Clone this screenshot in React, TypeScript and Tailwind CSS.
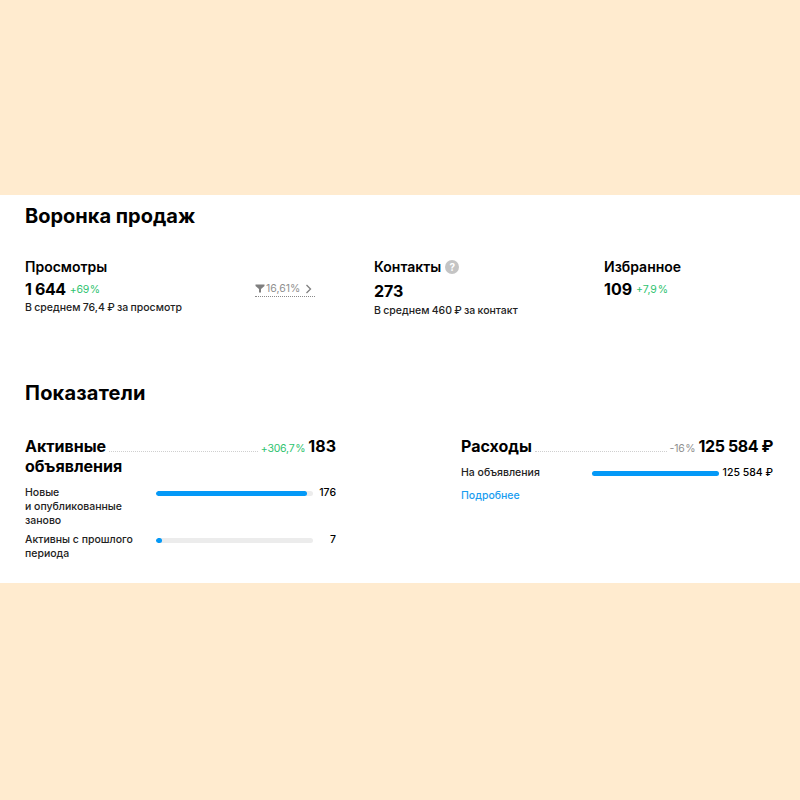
import React from "react";

const font = { fontFamily: "Inter, 'Noto Sans', sans-serif" };

function Bar({ pct }: { pct: number }) {
  return (
    <div className="h-[5px] w-[157px] shrink-0 overflow-hidden rounded-full bg-[#ececec]">
      <div className="h-full rounded-full bg-[#0499f7]" style={{ width: `${pct}%` }} />
    </div>
  );
}

export default function App() {
  return (
    <div className="flex h-[800px] w-[800px] flex-col bg-[#ffebcf] text-black" style={font}>
      <div className="mt-[195px] flex h-[388px] w-full flex-col bg-white px-[25px]">
        <h2 className="mt-[7px] text-[20px] leading-[28px] font-bold">Воронка продаж</h2>

        <div className="mt-[27px] flex">
          <div className="w-[290px]">
            <div className="text-[14px] leading-[20px] font-semibold">Просмотры</div>
            <div className="mt-[1px] flex h-[22px] items-center">
              <span className="text-[16px] leading-[22px] font-bold tracking-[-0.4px]">1 644</span>
              <span className="ml-[4px] mt-[2px] text-[10.5px] leading-[14px] text-[#2fc36f] tracking-[-0.2px] [word-spacing:-2px]">+69 %</span>
              <span className="ml-auto flex h-[16px] w-[60px] items-center border-b border-dotted border-[#8a8a8a] text-[10.5px] leading-[14px] text-[#8f8f8f]">
                <svg width="10" height="9" viewBox="0 0 10 9" className="mr-[1px]">
                  <path d="M0.5 0.5h9v1.5L6 5v3.5H4V5L0.5 2z" fill="#7f7f7f" />
                </svg>
                16,61%
                <svg width="7" height="10" viewBox="0 0 7 10" className="ml-auto mr-[3px]">
                  <path d="M1.5 1l4 4-4 4" fill="none" stroke="#7f7f7f" strokeWidth="1.3" />
                </svg>
              </span>
            </div>
            <div className="mt-[1px] text-[10.5px] leading-[14px] font-medium text-[#222] [word-spacing:-0.5px]">В среднем 76,4 ₽ за просмотр</div>
          </div>

          <div className="ml-[59px] w-[230px]">
            <div className="flex items-center text-[14px] leading-[20px] font-semibold">
              Контакты
              <span className="ml-[4px] flex h-[14px] w-[14px] items-center justify-center rounded-full bg-[#c4c4c4] text-[10px] leading-none font-bold text-white">?</span>
            </div>
            <div className="mt-[3px] text-[16px] leading-[22px] font-bold">273</div>
            <div className="mt-[2px] text-[10.5px] leading-[14px] font-medium text-[#222] [word-spacing:-0.5px]">В среднем 460 ₽ за контакт</div>
          </div>

          <div>
            <div className="text-[14px] leading-[20px] font-semibold">Избранное</div>
            <div className="mt-[1px] flex h-[22px] items-center">
              <span className="text-[16px] leading-[22px] font-bold">109</span>
              <span className="ml-[4px] mt-[2px] text-[10.5px] leading-[14px] text-[#2fc36f] [word-spacing:-2px]">+7,9 %</span>
            </div>
          </div>
        </div>

        <h2 className="mt-[61px] text-[20px] leading-[28px] font-bold tracking-[0.2px]">Показатели</h2>

        <div className="mt-[29px] flex gap-[125px]">
          <div className="w-[311px]">
            <div className="text-[16px] leading-[20px] font-bold">
              <div className="flex items-baseline">
                <span>Активные</span>
                <span className="mx-[3px] flex-1 border-b border-dotted border-[#cfcfcf]" />
                <span className="mr-[3px] text-[10.5px] leading-none font-normal text-[#2fc36f] tracking-[-0.2px] [word-spacing:-2px]">+306,7 %</span>
                <span>183</span>
              </div>
              <div>объявления</div>
            </div>
            <div className="mt-[10px] flex">
              <div className="w-[131px] text-[10.5px] leading-[14px] font-medium text-[#222]">Новые<br />и опубликованные<br />заново</div>
              <div className="mt-[5px]"><Bar pct={96} /></div>
              <div className="flex-1 text-right text-[10.5px] leading-[14px] font-medium">176</div>
            </div>
            <div className="mt-[5px] flex">
              <div className="w-[131px] text-[10.5px] leading-[14px] font-medium text-[#222]">Активны с прошлого периода</div>
              <div className="mt-[5px]"><Bar pct={4} /></div>
              <div className="flex-1 text-right text-[10.5px] leading-[14px] font-medium">7</div>
            </div>
          </div>

          <div className="w-[312px]">
            <div className="flex items-baseline text-[16px] leading-[20px] font-bold">
              <span>Расходы</span>
              <span className="mx-[3px] flex-1 border-b border-dotted border-[#cfcfcf]" />
              <span className="mr-[3px] text-[10.5px] leading-none font-normal text-[#8f8f8f] tracking-[-0.2px] [word-spacing:-2px]">-16 %</span>
              <span className="tracking-[-0.4px]">125 584 ₽</span>
            </div>
            <div className="mt-[10px] flex items-start">
              <div className="w-[131px] text-[10.5px] leading-[14px] font-medium text-[#222]">На объявления</div>
              <div className="mt-[5px] h-[5px] w-[127px] rounded-full bg-[#0499f7]" />
              <div className="flex-1 text-right text-[10.5px] leading-[14px] font-medium">125 584 ₽</div>
            </div>
            <div className="mt-[9px] text-[10.5px] leading-[14px] font-medium text-[#1a9df0]">Подробнее</div>
          </div>
        </div>
      </div>
    </div>
  );
}
